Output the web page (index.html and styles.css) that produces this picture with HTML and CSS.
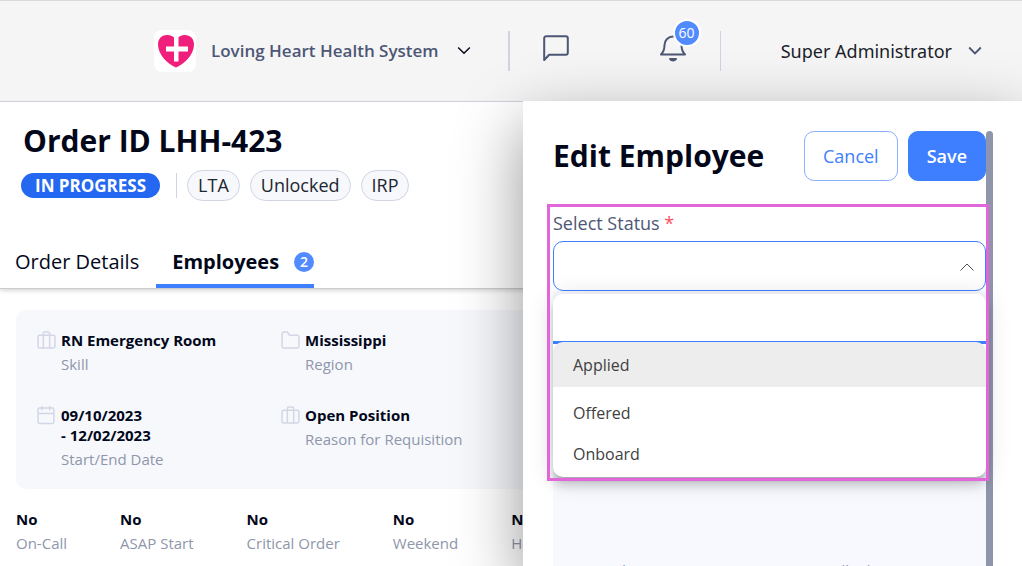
FILE: index.html
```
<!DOCTYPE html>
<html lang="en">
<head>
<meta charset="utf-8">
<meta name="viewport" content="width=device-width, initial-scale=1">
<title>Order ID LHH-423</title>
<link rel="stylesheet" href="styles.css">
</head>
<body>
<header class="topbar">
  <button class="org" type="button">
    <svg class="org-logo" viewBox="0 0 42 42" aria-hidden="true">
      <rect width="42" height="42" rx="8" fill="#fff"/>
      <path d="M22 37.500C14 34 4 25 4 14.500C4 8 8.500 5 13 5c4 0 7 1.500 9 4.500C24 6.500 27.500 5 31 5c5 0 9 3.500 9 9.500C40 25 30 34 22 37.500z" fill="#f01f7c"/>
      <path d="M20 4h4.500v12.500H34v5h-9.500v10H20v-10h-8v-5h8z" fill="#fff"/>
    </svg>
    <span class="org-name">Loving Heart Health System</span>
    <svg class="chevron" viewBox="0 0 12 8" aria-hidden="true"><path d="M1 1l5 5 5-5"/></svg>
  </button>
  <div class="alerts">
    <button class="icon-button" type="button" aria-label="Messages">
      <svg viewBox="0 0 26 28" aria-hidden="true"><path d="M1.200 26V4.200a2 2 0 0 1 2-2h19.600a2 2 0 0 1 2 2v14.600a2 2 0 0 1-2 2H6.200z"/></svg>
    </button>
    <button class="icon-button" type="button" aria-label="Notifications">
      <svg viewBox="0 0 26 28" aria-hidden="true"><path d="M1 20.500h24c-2.500-2.500-3.500-5-3.500-9.500a8.500 8.500 0 0 0-17 0c0 4.500-1 7-3.500 9.500zM10 25c1.500 2 4.500 2 6 0z"/></svg>
      <span class="count">60</span>
    </button>
  </div>
  <button class="account" type="button">
    <span>Super Administrator</span>
    <svg class="chevron" viewBox="0 0 12 8" aria-hidden="true"><path d="M1 1l5 5 5-5"/></svg>
  </button>
</header>

<main class="order">
  <section class="order-head">
    <h1 class="title">Order ID LHH-423</h1>
    <div class="tags">
      <span class="status">IN PROGRESS</span>
      <span class="tag-list">
        <span class="tag">LTA</span>
        <span class="tag">Unlocked</span>
        <span class="tag">IRP</span>
      </span>
    </div>
    <nav class="tabs">
      <a class="tab" href="#details">Order Details</a>
      <a class="tab tab-active" href="#employees">Employees <span class="tab-count">2</span></a>
    </nav>
  </section>

  <dl class="summary">
    <div class="fact">
      <svg viewBox="0 0 18 18" aria-hidden="true"><path d="M2.500 4h13a1.500 1.500 0 0 1 1.500 1.500v9a1.500 1.500 0 0 1-1.500 1.500h-13a1.500 1.500 0 0 1-1.500-1.500v-9A1.500 1.500 0 0 1 2.500 4zM6 16V2.500A1.500 1.500 0 0 1 7.500 1h3A1.500 1.500 0 0 1 12 2.500V16"/></svg>
      <dt>Skill</dt><dd>RN Emergency Room</dd>
    </div>
    <div class="fact">
      <svg viewBox="0 0 18 18" aria-hidden="true"><path d="M2.500 1H6l2 3h7.500A1.500 1.500 0 0 1 17 5.500v9a1.500 1.500 0 0 1-1.500 1.500h-13A1.500 1.500 0 0 1 1 14.500v-12A1.500 1.500 0 0 1 2.500 1z"/></svg>
      <dt>Region</dt><dd>Mississippi</dd>
    </div>
    <div class="fact">
      <svg viewBox="0 0 18 18" aria-hidden="true"><path d="M2.500 2h12A1.500 1.500 0 0 1 16 3.500V15a1.500 1.500 0 0 1-1.500 1.500h-12A1.500 1.500 0 0 1 1 15V3.500A1.500 1.500 0 0 1 2.500 2zM1 7h15M5 0v4M12 0v4"/></svg>
      <dt>Start/End Date</dt><dd>09/10/2023<br>- 12/02/2023</dd>
    </div>
    <div class="fact">
      <svg viewBox="0 0 18 18" aria-hidden="true"><path d="M2.500 4h13a1.500 1.500 0 0 1 1.500 1.500v9a1.500 1.500 0 0 1-1.500 1.500h-13a1.500 1.500 0 0 1-1.500-1.500v-9A1.500 1.500 0 0 1 2.500 4zM6 16V2.500A1.500 1.500 0 0 1 7.500 1h3A1.500 1.500 0 0 1 12 2.500V16"/></svg>
      <dt>Reason for Requisition</dt><dd>Open Position</dd>
    </div>
  </dl>

  <dl class="flags">
    <div class="flag"><dt>On-Call</dt><dd>No</dd></div>
    <div class="flag"><dt>ASAP Start</dt><dd>No</dd></div>
    <div class="flag"><dt>Critical Order</dt><dd>No</dd></div>
    <div class="flag"><dt>Weekend</dt><dd>No</dd></div>
    <div class="flag"><dt>Holiday</dt><dd>No</dd></div>
  </dl>
</main>

<aside class="drawer">
  <form class="drawer-body">
    <div class="drawer-head">
      <h2 class="title">Edit Employee</h2>
      <button class="button" type="button">Cancel</button>
      <button class="button button-primary" type="submit">Save</button>
    </div>
    <div class="field">
      <label class="field-label" for="status">Select Status <span class="required">*</span></label>
      <div class="select-wrap">
        <select class="select" id="status" required>
          <option value=""></option>
          <option>Applied</option>
          <option>Offered</option>
          <option>Onboard</option>
        </select>
        <svg class="select-arrow" viewBox="0 0 14 8" aria-hidden="true"><path d="M0.500 7.500L7 1l6.500 6.500"/></svg>
        <div class="menu">
          <input class="menu-search" type="text" aria-label="Search statuses">
          <ul class="options">
            <li class="option option-active">Applied</li>
            <li class="option">Offered</li>
            <li class="option">Onboard</li>
          </ul>
        </div>
      </div>
      <div class="highlight"></div>
    </div>
    <div class="details">
      <span>Order</span>
      <span>Allied</span>
    </div>
  </form>
  <div class="scrollbar"></div>
</aside>
</body>
</html>
```

FILE: styles.css
```
* { box-sizing: border-box; }

html, body { height: 100%; }

body {
  margin: 0;
  overflow: hidden;
  display: flex;
  flex-direction: column;
  position: relative;
  background: #fff;
  color: #03071a;
  font-family: "Open Sans", "Noto Sans", sans-serif;
  font-size: 15px;
  line-height: 20px;
}

button, input, select { font: inherit; }
button { cursor: pointer; }
dl, dd, ul { margin: 0; padding: 0; }
ul { list-style: none; }

/* Top bar */
.topbar {
  flex: none;
  display: flex;
  align-items: center;
  height: 102px;
  padding: 0 40px 0 154px;
  border-top: 1px solid #d9d9d9;
  border-bottom: 1px solid #d2d4e2;
  background: #f5f5f5;
}

.org, .account, .icon-button {
  display: flex;
  align-items: center;
  padding: 0;
  border: 0;
  background: none;
}

.org { color: #4d5775; font-size: 17px; font-weight: 600; }
.org-logo { width: 42px; height: 42px; margin-right: 15px; }
.chevron {
  width: 14px;
  height: 10px;
  fill: none;
  stroke: #03071a;
  stroke-width: 1.2;
}
.org .chevron { margin-left: 18px; }

.alerts {
  display: flex;
  align-items: center;
  gap: 91px;
  height: 40px;
  margin-left: 37px;
  padding: 0 34px 6px 33px;
  border-left: 2px solid #cfd3e4;
  border-right: 1px solid #cfd3e4;
}
.icon-button { position: relative; }
.icon-button svg {
  width: 26px;
  height: 28px;
  fill: none;
  stroke: #4d5775;
  stroke-width: 2;
  stroke-linejoin: round;
}
.count {
  position: absolute;
  top: -15px;
  left: 13px;
  width: 28px;
  border: 2px solid #fff;
  border-radius: 14px;
  background: #528bff;
  color: #fff;
  font-size: 14px;
  line-height: 24px;
  text-align: center;
}

.account {
  margin-left: auto;
  gap: 16px;
  color: #1b1f2b;
  font-family: "Noto Sans", "Open Sans", sans-serif;
  font-size: 18px;
}
.account .chevron { stroke: #4d5775; stroke-width: 1.6; }

/* Order page */
.order { flex: 1; min-height: 0; }

.order-head {
  padding-top: 19px;
  border-bottom: 1px solid #ccc;
  box-shadow: 0 2px 4px rgba(0, 0, 0, 0.15);
}
.title {
  margin: 0;
  font-size: 30px;
  line-height: 40px;
  font-weight: 700;
}
.order-head .title { padding-left: 23px; }

.tags {
  display: flex;
  align-items: center;
  margin-top: 9px;
  padding-left: 21px;
}
.status {
  padding: 0 14px;
  border-radius: 13px;
  background: #2468f2;
  color: #fff;
  font-size: 17px;
  font-weight: 700;
  line-height: 25px;
}
.tag-list {
  display: flex;
  align-items: center;
  gap: 10px;
  margin-left: 16px;
}
.tag-list::before { content: ""; width: 1px; height: 25px; background: #cfd3e4; }
.tag {
  padding: 0 10px;
  border: 1px solid #d0d4e3;
  border-radius: 16px;
  background: #f6f8fc;
  color: #22262f;
  font-size: 18px;
  line-height: 29px;
}

.tabs { display: flex; gap: 17px; margin-top: 35px; padding-left: 15px; }
.tab {
  padding: 13px 0 9px;
  border-bottom: 4px solid transparent;
  color: #03071a;
  font-size: 20px;
  line-height: 26px;
  text-decoration: none;
}
.tab-active {
  display: flex;
  align-items: center;
  gap: 15px;
  padding-left: 16px;
  border-bottom-color: #3d7fff;
  font-weight: 700;
}
.tab-count {
  width: 20px;
  border-radius: 10px;
  background: #528bff;
  color: #fff;
  font-size: 14px;
  font-weight: 600;
  line-height: 20px;
  text-align: center;
}

.summary {
  display: grid;
  grid-template-columns: 244px 1fr;
  row-gap: 31px;
  margin: 21px 16px 0;
  padding: 20px 20px 20px 21px;
  border-radius: 10px;
  background: #f6f8fc;
}
.fact {
  display: grid;
  grid-template-columns: 19px 1fr;
  grid-template-rows: auto 1fr;
  column-gap: 5px;
  row-gap: 4px;
}
.fact svg {
  grid-row: 1 / 3;
  width: 19px;
  height: 19px;
  margin-top: 1px;
  fill: none;
  stroke: #d3d6e4;
  stroke-width: 1.4;
  overflow: visible;
}
.fact dt { grid-row: 2; grid-column: 2; }
.fact dd { grid-row: 1; grid-column: 2; }

dt { color: #8f96ab; }
dd { font-weight: 700; }

.flags { display: flex; gap: 53px; margin-top: 20px; padding-left: 16px; }
.flag { display: flex; flex-direction: column-reverse; gap: 4px; }

/* Drawer */
.drawer {
  position: absolute;
  top: 101px;
  right: 0;
  bottom: 0;
  width: 499px;
  display: flex;
  padding: 30px 29px 0 30px;
  background: #fff;
  box-shadow: 0 24px 62px rgba(0, 0, 0, 0.42);
}
.drawer-body {
  flex: 1;
  min-width: 0;
  display: flex;
  flex-direction: column;
}
.scrollbar {
  width: 7px;
  border-radius: 4px 4px 0 0;
  background: #8f96ab;
}
.drawer-head { display: flex; align-items: center; gap: 10px; }
.drawer-head .title { flex: 1; }

.button {
  height: 50px;
  padding: 0 18px;
  border: 1px solid #8ab0ff;
  border-radius: 10px;
  background: #fff;
  color: #3d7fff;
  font-size: 18px;
}
.button-primary {
  border-color: #3d7fff;
  background: #3d7fff;
  color: #fff;
  font-weight: 600;
}

.field { position: relative; margin-top: 30px; }
.field-label {
  display: block;
  color: #4d5775;
  font-size: 18px;
  line-height: 24px;
}
.required { color: #ff5160; }

.select-wrap { position: relative; margin-top: 6px; }
.select {
  display: block;
  width: 100%;
  height: 50px;
  padding: 0 20px;
  border: 1px solid #3d7fff;
  border-radius: 10px;
  appearance: none;
  background: #fff;
}
.select-arrow {
  position: absolute;
  top: 22px;
  right: 12px;
  width: 14px;
  height: 8px;
  fill: none;
  stroke: #505050;
}

.menu {
  position: absolute;
  top: 53px;
  left: 0;
  right: 0;
  overflow: hidden;
  border-radius: 10px;
  background: #fff;
  box-shadow:
    0 5px 5px -3px rgba(0, 0, 0, 0.2),
    0 8px 10px 1px rgba(0, 0, 0, 0.14),
    0 3px 24px 2px rgba(0, 0, 0, 0.12);
}
.menu-search {
  display: block;
  width: 100%;
  height: 50px;
  padding: 0 20px;
  border: 0;
  border-bottom: 3px solid #3d7fff;
  outline: 0;
}
.options {
  position: relative;
  margin-top: -2px;
  padding-bottom: 2px;
}
.option {
  padding: 0 20px;
  color: #404040;
  font-size: 16px;
  line-height: 41px;
}
.option-active {
  margin-bottom: 6px;
  padding-top: 2px;
  border-radius: 10px 10px 0 0;
  background: #ededed;
  line-height: 43px;
}

.highlight {
  position: absolute;
  inset: -7px -3px auto -6px;
  height: 277px;
  border: 3px solid #e066da;
  pointer-events: none;
}

.details {
  flex: 1;
  min-height: 0;
  display: grid;
  grid-template-columns: 233px 1fr;
  align-items: start;
  padding: 269px 0 0 46px;
  overflow: hidden;
  background: #f8f9fe;
  color: #8f96ab;
}
```
